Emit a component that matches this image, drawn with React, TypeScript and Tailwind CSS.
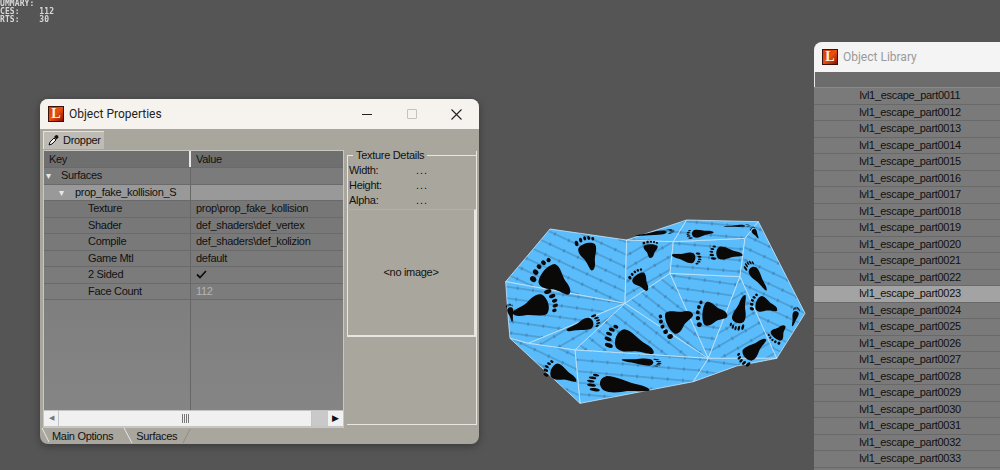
const propRows = [
  { key: "Surfaces", value: "", level: 0, arrow: true, bg: "bg-[#7b7b7b]" },
  { key: "prop_fake_kollision_S", value: "", level: 1, arrow: true, bg: "bg-[#999999]" },
  { key: "Texture", value: "prop\\prop_fake_kollision", level: 2, bg: "bg-[#777777]" },
  { key: "Shader", value: "def_shaders\\def_vertex", level: 2, bg: "bg-[#787878]" },
  { key: "Compile", value: "def_shaders\\def_kolizion", level: 2, bg: "bg-[#797979]" },
  { key: "Game Mtl", value: "default", level: 2, bg: "bg-[#7a7a7a]" },
  { key: "2 Sided", value: "check", level: 2, bg: "bg-[#7b7b7b]" },
  { key: "Face Count", value: "112", level: 2, bg: "bg-[#7c7c7c]", dim: true },
];

const libraryRows = Array.from({ length: 23 }, (_, i) => `lvl1_escape_part00${11 + i}`);

const feet = [
  [295, 130, -15, 1.1, 1.05],
  [190, 208, -50, 1.6, 1.3],
  [135, 290, 72, 1.3, 1.4],
  [280, 345, 72, 0.7, 1.05],
  [420, 398, -68, 1.3, 1.55],
  [560, 332, 245, 1.45, 1.05],
  [665, 312, -85, 1.45, 0.95],
  [750, 308, 195, 0.8, 1.1],
  [822, 285, -70, 0.95, 0.85],
  [865, 370, 220, 0.85, 0.6],
  [788, 422, 228, 0.9, 1.05],
  [452, 212, -35, 0.9, 0.72],
  [482, 118, 0, 0.85, 0.52],
  [590, 142, 98, 0.65, 0.9],
  [708, 130, -85, 0.78, 1.0],
  [630, 70, -95, 0.48, 0.82],
  [800, 198, -35, 0.6, 1.05],
  [212, 490, -65, 0.95, 1.05],
  [385, 526, -82, 0.95, 1.9],
  [455, 455, 95, 0.42, 1.2],
  [495, 70, 83, 0.25, 1.2],
  [742, 48, 88, 0.12, 0.8],
  [795, 68, -30, 0.3, 0.4],
  [62, 308, -10, 0.36, 0.55],
  [915, 320, 15, 0.36, 0.6],
];

const faces = [
  { pts: "47,215 180,57 410,90 405,280", p: "s1" },
  { pts: "47,215 405,280 115,400 60,385 55,330", p: "s2" },
  { pts: "115,400 405,280 255,420", p: "s3" },
  { pts: "255,420 405,280 655,445", p: "s4" },
  { pts: "255,420 655,445 610,515 270,580", p: "s5" },
  { pts: "60,385 115,400 255,420 270,580", p: "s1" },
  { pts: "410,90 550,95 540,190 405,280", p: "s3" },
  { pts: "405,280 540,190 655,445", p: "s4" },
  { pts: "540,190 750,200 655,445", p: "s2" },
  { pts: "550,95 765,85 750,200 540,190", p: "s5" },
  { pts: "410,90 590,30 550,95", p: "s5" },
  { pts: "590,30 805,35 765,85 550,95", p: "s5" },
  { pts: "765,85 805,35 945,310 860,445 750,200", p: "s1" },
  { pts: "750,200 860,445 655,445", p: "s3" },
  { pts: "655,445 860,445 740,468 610,515", p: "s2" },
];

function LogoIcon() {
  return (
    <div className="flex h-[16px] w-[16px] shrink-0 items-center justify-center border border-[#3a1208] bg-gradient-to-br from-[#d8380c] via-[#e8500f] to-[#8c1006]">
      <span className="font-['Liberation_Serif',serif] text-[14px] font-bold leading-none text-[#fff6d8]">L</span>
    </div>
  );
}

function MeshDrawing() {
  return (
    <svg viewBox="0 0 960 600" className="absolute left-[490px] top-[210px] h-[200px] w-[320px] blur-[0.5px]">
      <defs>
        {[
          ["s1", 25],
          ["s2", 8],
          ["s3", -30],
          ["s4", 38],
          ["s5", 5],
        ].map(([id, angle]) => (
          <pattern key={id} id={`${id}`} width="46" height="34" patternUnits="userSpaceOnUse" patternTransform={`rotate(${angle})`}>
            <rect width="46" height="34" fill="#5bbcfb" />
            <line x1="0" y1="17" x2="46" y2="17" stroke="#2f6288" strokeWidth="1.8" />
            <line x1="23" y1="12" x2="23" y2="22" stroke="#2a5c82" strokeWidth="2" />
          </pattern>
        ))}
        <g id="foot">
          <path d="M-22,-22 C-10,-32 15,-32 24,-20 C28,-5 15,10 12,25 C10,40 5,50 -2,50 C-8,50 -8,30 -14,15 C-20,5 -30,-10 -22,-22Z" fill="#0b0808" />
          <ellipse cx="-24" cy="-36" rx="5" ry="8" fill="#0b0808" />
          <ellipse cx="-11" cy="-42" rx="4.5" ry="7" fill="#0b0808" />
          <ellipse cx="1" cy="-44" rx="4" ry="6" fill="#0b0808" />
          <ellipse cx="12" cy="-42" rx="4" ry="6" fill="#0b0808" />
          <ellipse cx="22" cy="-37" rx="4" ry="5" fill="#0b0808" />
        </g>
      </defs>
      {faces.map((f, i) => (
        <polygon key={i} points={f.pts} fill={`url(#${f.p})`} stroke="#c4e6fb" strokeWidth="2.5" strokeLinejoin="round" />
      ))}
      {feet.map(([x, y, r, sx, sy], i) => (
        <use key={i} href="#foot" transform={`translate(${x} ${y}) rotate(${r}) scale(${sx} ${sy})`} />
      ))}
    </svg>
  );
}

function PropertiesWindow() {
  return (
    <div className="absolute left-[40px] top-[99px] flex h-[345px] w-[439px] flex-col overflow-hidden rounded-[8px] bg-[#a9a69e] shadow-[0_2px_8px_rgba(0,0,0,0.35)]">
      <div className="flex h-[30px] shrink-0 items-center bg-[#f6f3ef] pl-[8px]">
        <LogoIcon />
        <span className="ml-[5px] font-['Roboto',sans-serif] text-[12px] text-[#222222]">Object Properties</span>
        <div className="ml-auto flex items-center text-[#222222]">
          <div className="flex w-[45px] justify-center">
            <div className="h-px w-[10px] bg-[#222222]" />
          </div>
          <div className="flex w-[45px] justify-center">
            <div className="h-[10px] w-[10px] rounded-[1px] border border-[#c4c2bf]" />
          </div>
          <div className="flex w-[45px] justify-center">
            <svg width="11" height="11" viewBox="0 0 11 11" stroke="#222222" strokeWidth="1.1">
              <path d="M0.5 0.5 L10.5 10.5 M10.5 0.5 L0.5 10.5" />
            </svg>
          </div>
        </div>
      </div>

      <div className="flex h-[21px] shrink-0 items-center pl-[3px]">
        <div className="flex h-[18px] w-[61px] items-center gap-[4px] border-l border-t border-[#e4e2dc] bg-[#bdbbb4] pl-[4px]">
          <svg width="11" height="12" viewBox="0 0 11 12">
            <path d="M1 11 L2 8 L6 4 L8 6 L4 10 Z" fill="#f2f2f2" stroke="#111111" strokeWidth="1" />
            <path d="M6 3 L8 1 L10 1.5 L10.5 3.5 L8.5 5.5 Z" fill="#111111" />
          </svg>
          <span className="font-['Liberation_Sans',sans-serif] text-[11px] tracking-[-0.3px] text-[#111111]">Dropper</span>
        </div>
      </div>

      <div className="flex min-h-0 flex-1 gap-[3px] pl-[3px]">
        <div className="flex h-[278px] w-[301px] flex-col border border-[#c9c7c1] font-['Liberation_Sans',sans-serif] text-[11px] tracking-[-0.3px] text-[#111111]">
          <div className="grid h-[16px] shrink-0 grid-cols-[147px_1fr] bg-[#6f6f6f] leading-[16px]">
            <div className="border-r-2 border-[#e8e8e8] pl-[5px]">Key</div>
            <div className="pl-[5px]">Value</div>
          </div>
          <div className="min-h-0 flex-1 bg-gradient-to-b from-[#777777] to-[#858585]">
            {propRows.map((row) => (
              <div key={row.key} className={`grid h-[16.5px] grid-cols-[147px_1fr] border-t border-[#6a6a6a] leading-[15px] ${row.bg}`}>
                <div className="flex items-center border-r border-[#666666]">
                  {row.level === 0 && <span className="ml-[2px] w-[15px] text-[10px] text-[#e8e8e8]">▾</span>}
                  {row.level === 1 && <span className="ml-[15px] w-[16px] text-[10px] text-[#e8e8e8]">▾</span>}
                  {row.level === 2 && <span className="ml-[44px]" />}
                  <span className="whitespace-nowrap">{row.key}</span>
                </div>
                <div className={`flex items-center pl-[5px] ${row.dim ? "text-[#b4b4b4]" : ""}`}>
                  {row.value === "check" ? (
                    <svg width="11" height="9" viewBox="0 0 11 9" fill="none" stroke="#111111" strokeWidth="1.8">
                      <path d="M1 4.5 L4 7.5 L10 1" />
                    </svg>
                  ) : (
                    row.value
                  )}
                </div>
              </div>
            ))}
            <div className="grid h-[111px] grid-cols-[147px_1fr] border-t border-[#6a6a6a]">
              <div className="border-r border-[#666666]" />
              <div />
            </div>
          </div>
          <div className="flex h-[17px] shrink-0 items-stretch border-y border-[#c4c4c4] bg-[#f0f0f0]">
            <div className="flex w-[14px] items-center justify-center text-[7px] text-[#777777]">◀</div>
            <div className="flex w-[254px] items-center justify-center gap-px border-x border-[#c4c4c4]">
              <div className="h-[9px] w-px bg-[#777777]" />
              <div className="h-[9px] w-px bg-[#777777]" />
              <div className="h-[9px] w-px bg-[#777777]" />
              <div className="h-[9px] w-px bg-[#777777]" />
            </div>
            <div className="w-[16px] bg-[#c9c9c9]" />
            <div className="flex flex-1 items-center justify-center text-[9px] text-[#111111]">▶</div>
          </div>
        </div>

        <div className="mt-[1px] flex h-[274px] w-[130px] flex-col border-b border-r border-[#e8e6e1] font-['Liberation_Sans',sans-serif] text-[11px] tracking-[-0.3px] text-[#111111]">
          <fieldset className="h-[58px] shrink-0 border-t border-l border-[#e8e6e1]">
            <legend className="ml-[5px] px-[3px] leading-[9px]">Texture Details</legend>
            <div className="grid grid-cols-[67px_1fr] pl-[1px] pt-[3px] leading-[15px]">
              <span>Width:</span>
              <span className="tracking-[1px]">...</span>
              <span>Height:</span>
              <span className="tracking-[1px]">...</span>
              <span>Alpha:</span>
              <span className="tracking-[1px]">...</span>
            </div>
          </fieldset>
          <div className="flex h-[128px] shrink-0 items-center justify-center border-b-2 border-l border-r-2 border-t border-[#e8e6e1] border-t-[#b4b1a9]">
            &lt;no image&gt;
          </div>
        </div>
      </div>

      <div className="relative flex h-[16px] shrink-0 items-center font-['Liberation_Sans',sans-serif] text-[11px] tracking-[-0.3px] text-[#111111]">
        <span className="ml-[12px]">Main Options</span>
        <span className="ml-[23px]">Surfaces</span>
        <svg width="160" height="16" viewBox="0 0 160 16" fill="none" className="absolute left-0 top-0">
          <path d="M2 0 L9 14 M84 0 L92 15" stroke="#e8e6e1" strokeWidth="1" />
          <path d="M150 1 L143 15" stroke="#8f8c85" strokeWidth="1" />
        </svg>
      </div>
    </div>
  );
}

function LibraryWindow() {
  return (
    <div className="absolute left-[814px] top-[42px] flex h-[440px] w-[200px] flex-col overflow-hidden rounded-tl-[8px] bg-[#7a7a7a]">
      <div className="flex h-[30px] shrink-0 items-center bg-[#f4f4f4] pl-[8px]">
        <LogoIcon />
        <span className="ml-[5px] font-['Roboto',sans-serif] text-[12px] text-[#9a9a9a]">Object Library</span>
      </div>
      <div className="h-[15px] shrink-0 border-l border-[#e6e6e6] bg-[#6c6c6c]" />
      <div className="border-t border-[#8a8a8a] font-['Liberation_Sans',sans-serif] text-[11px] tracking-[-0.3px] text-[#111111]">
        {libraryRows.map((name) => (
          <div
            key={name}
            className={`h-[16.5px] border-b border-[#696969] leading-[14px] ${
              name.endsWith("0023") ? "bg-[#a3a3a3]" : "bg-[#7a7a7a]"
            }`}
          >
            <div className="w-[192px] text-center">{name}</div>
          </div>
        ))}
      </div>
    </div>
  );
}

export default function App() {
  return (
    <div className="relative h-[470px] w-[1000px] overflow-hidden bg-[#555555]">
      <div className="absolute left-0 top-0 whitespace-pre font-['DejaVu_Sans_Mono',monospace] text-[8px] font-bold leading-[8px] tracking-[0.1px] text-[#d8d8d8] blur-[0.3px]">
        <div>UMMARY:</div>
        <div>CES:    112</div>
        <div>RTS:    30</div>
      </div>
      <PropertiesWindow />
      <MeshDrawing />
      <LibraryWindow />
    </div>
  );
}
